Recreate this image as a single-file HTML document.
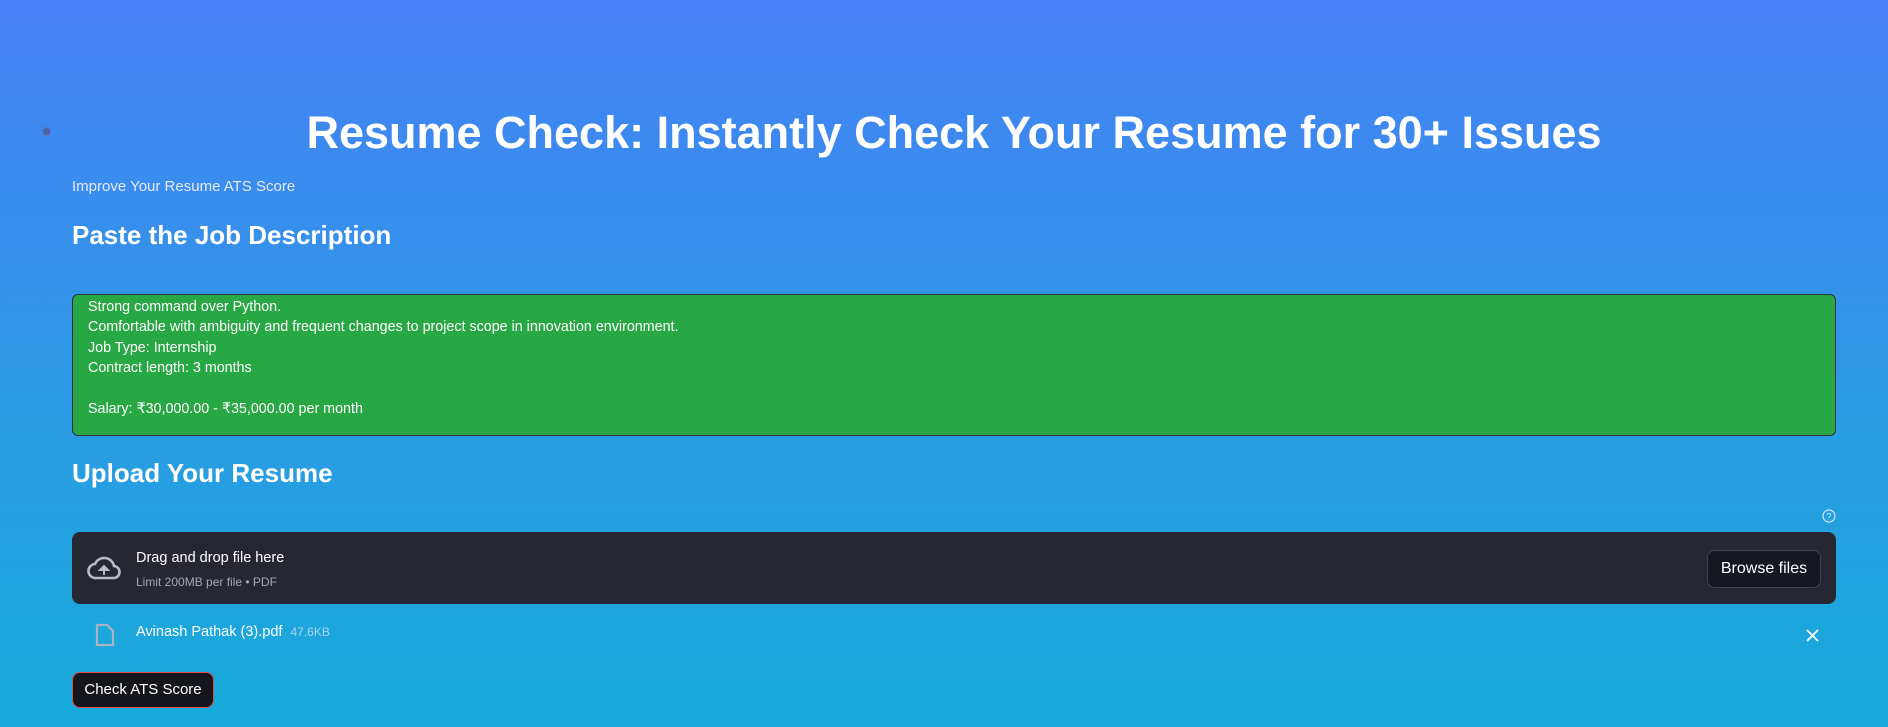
<!DOCTYPE html>
<html><head><meta charset="utf-8"><style>
*{margin:0;padding:0;box-sizing:border-box}
body{width:1888px;height:727px;overflow:hidden;background:linear-gradient(180deg,#4580f6 0%,#2f98e6 50%,#16abd9 100%);font-family:"Liberation Sans",sans-serif;color:#fff;position:relative}
.a{position:absolute;white-space:nowrap}
h1{position:absolute;left:0;width:1908px;text-align:center;top:106px;font-size:45px;font-weight:bold;line-height:54px}
.h2{font-weight:bold;font-size:26px}
.ta{position:absolute;left:72px;top:294px;width:1764px;height:142px;background:#28a745;border:1px solid #2b3038;border-radius:6px;padding:2px 15px;font-size:14.3px;line-height:20.4px}
.dz{position:absolute;left:72px;top:532px;width:1764px;height:72px;background:#262730;border-radius:8px}
.btn{position:absolute;border-radius:8px}
</style></head><body>
<div class="a" style="left:42px;top:127px;width:9px;height:9px;border-radius:50%;background:#4a62a8;border:1px solid #5b73b8"></div>
<h1>Resume Check: Instantly Check Your Resume for 30+ Issues</h1>
<div class="a" style="left:72px;top:178px;font-size:15px;color:#e4ecf8">Improve Your Resume ATS Score</div>
<div class="a h2" style="left:72px;top:220px">Paste the Job Description</div>
<div class="ta">Strong command over Python.<br>Comfortable with ambiguity and frequent changes to project scope in innovation environment.<br>Job Type: Internship<br>Contract length: 3 months<br><br>Salary: ₹30,000.00 - ₹35,000.00 per month</div>
<div class="a h2" style="left:72px;top:458px">Upload Your Resume</div>
<svg class="a" style="left:1822px;top:509px" width="14" height="14" viewBox="0 0 14 14"><circle cx="7" cy="7" r="6" fill="none" stroke="#cfe6fa" stroke-width="1.2"/><text x="7" y="10.5" font-size="9" text-anchor="middle" fill="#cfe6fa" font-family="Liberation Sans">?</text></svg>
<div class="dz"></div>
<svg class="a" style="left:87px;top:554px" width="34" height="28" viewBox="0 0 34 28"><path d="M9 24h17a6 6 0 0 0 1-12 10 10 0 0 0-19-2A7 7 0 0 0 9 24z" fill="none" stroke="#b8bcc6" stroke-width="2.6"/><path d="M17 21v-7M13 16l4-4 4 4z" fill="#b8bcc6" stroke="#b8bcc6" stroke-width="2"/></svg>
<div class="a" style="left:136px;top:550px;font-size:14.5px">Drag and drop file here</div>
<div class="a" style="left:136px;top:575px;font-size:12px;color:#a6a9b2">Limit 200MB per file • PDF</div>
<div class="btn" style="left:1707px;top:550px;width:114px;height:38px;background:#151821;border:1px solid #43454d;font-size:16px;text-align:center;line-height:36px">Browse files</div>
<svg class="a" style="left:95px;top:623px" width="20" height="24" viewBox="0 0 20 24"><path d="M2 2h10l6 6v14H2z" fill="none" stroke="#a9b4c2" stroke-width="2.2"/></svg>
<div class="a" style="left:136px;top:624px;font-size:14.5px">Avinash Pathak (3).pdf <span style="font-size:12px;color:#a7d3ee;margin-left:4px">47.6KB</span></div>
<svg class="a" style="left:1806px;top:629px" width="13" height="13" viewBox="0 0 13 13"><path d="M1 1l11 11M12 1L1 12" stroke="#fff" stroke-width="1.8"/></svg>
<div class="btn" style="left:72px;top:672px;width:142px;height:36px;background:#14161c;border:1px solid #e0484c;font-size:15px;text-align:center;line-height:34px">Check ATS Score</div>
</body></html>
